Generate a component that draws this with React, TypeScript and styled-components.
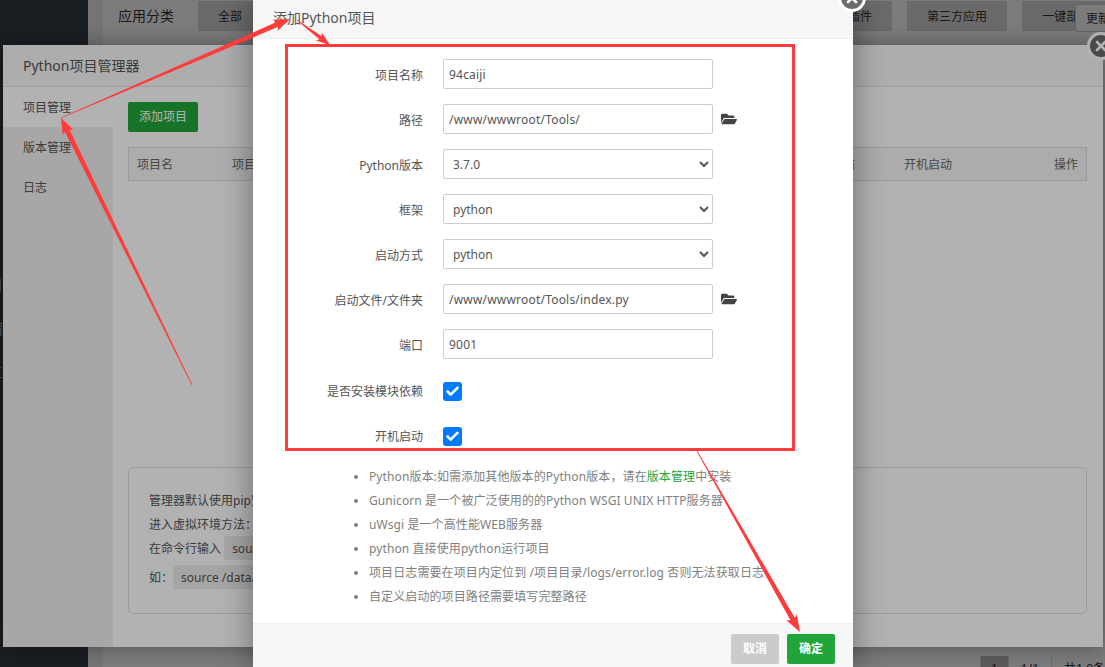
import React from 'react';
import styled, { createGlobalStyle } from 'styled-components';
import { FaFolderOpen } from 'react-icons/fa';
import { X, Check } from 'lucide-react';

const FONT = '"Noto Sans", "Noto Sans CJK SC", sans-serif';
const GREEN = '#20a53a';
const RED = '#ff3b3b';

const GlobalStyle = createGlobalStyle`
  html, body {
    margin: 0;
    padding: 0;
    overflow: hidden;
  }
  * {
    box-sizing: border-box;
  }
  body {
    font-family: ${FONT};
    font-size: 12px;
    color: #555;
  }
`;

const Stage = styled.div`
  position: relative;
  width: 1105px;
  height: 667px;
  overflow: hidden;
`;

/* page behind the dialogs */
const Page = styled.div`
  display: flex;
  height: 100%;
`;

const NavBar = styled.div`
  width: 88px;
  flex: none;
  padding-top: 263px;
  background: #353f49;
  overflow: hidden;
`;

const NavGlyph = styled.div`
  height: 43.5px;
  line-height: 43.5px;
  margin-left: -11px;
  font-size: 14px;
  color: #aab0b5;
`;

const Main = styled.div`
  flex: 1;
  min-width: 0;
  padding-left: 15px;
  background: #f0f0f0;
`;

const Panel = styled.div`
  display: flex;
  flex-direction: column;
  height: 100%;
  padding: 1px 0 0 15px;
  background: #fff;
  overflow: hidden;
`;

const CategoryRow = styled.div`
  display: flex;
  align-items: center;
  gap: 15px;
`;

const CategoryLabel = styled.div`
  flex: none;
  width: 65px;
  padding-bottom: 2px;
  font-size: 14px;
  color: #333;
  white-space: nowrap;
`;

const CategoryButton = styled.div`
  flex: none;
  height: 30px;
  line-height: 31px;
  padding: 0 20px;
  background: #dcdcdc;
  color: #333;
  white-space: nowrap;
`;

const Pager = styled.div`
  display: flex;
  justify-content: flex-end;
  height: 11px;
  margin: auto -12px 0 0;
`;

const PagerItem = styled.div<{ $active?: boolean }>`
  flex: none;
  height: 30px;
  line-height: 26px;
  padding: 0 ${(p) => (p.$active ? 10 : 12)}px;
  border-left: 1px solid #ddd;
  background: ${(p) => (p.$active ? '#bbb' : '#fff')};
  color: #333;
  white-space: nowrap;
`;

const UpdateButton = styled.div`
  position: absolute;
  top: 4px;
  left: 1075px;
  width: 60px;
  height: 28px;
  padding-left: 10px;
  line-height: 28px;
  border: 1px solid #ccc;
  border-radius: 3px;
  background: #fff;
  color: #333;
`;

const Mask = styled.div`
  position: absolute;
  inset: 0;
  background: rgba(0, 0, 0, 0.3);
`;

/* close button shared by both dialogs */
const CloseButton = styled.div<{ $top: number; $right: number }>`
  position: absolute;
  top: ${(p) => p.$top}px;
  right: ${(p) => p.$right}px;
  display: flex;
  align-items: center;
  justify-content: center;
  width: 28px;
  height: 28px;
  border: 3px solid #fff;
  border-radius: 50%;
  background: #6b6b6b;
  color: #fff;
`;

/* Python manager window */
const ManagerWindow = styled.div`
  position: absolute;
  left: 3px;
  top: 45px;
  display: flex;
  flex-direction: column;
  width: 1100px;
  height: 602px;
  background: #fff;
  box-shadow: 0 0 20px rgba(0, 0, 0, 0.35);
`;

const ManagerTitle = styled.div`
  flex: none;
  height: 42px;
  line-height: 41px;
  padding-left: 20px;
  border-bottom: 1px solid #e6e6e6;
  background: #f8f8f8;
  font-size: 14px;
`;

const ManagerBody = styled.div`
  flex: 1;
  display: flex;
  min-height: 0;
`;

const TabList = styled.div`
  flex: none;
  width: 110px;
  background: #f0f0f0;
`;

const TabItem = styled.div<{ $active?: boolean }>`
  height: 40px;
  line-height: 42px;
  padding-left: 20px;
  background: ${(p) => (p.$active ? '#fff' : 'transparent')};
`;

const ManagerContent = styled.div`
  flex: 1;
  display: flex;
  flex-direction: column;
  padding: 15px 16px 33px 15px;
`;

const AddButton = styled.div`
  width: 70px;
  height: 30px;
  line-height: 30px;
  text-align: center;
  border-radius: 2px;
  background: ${GREEN};
  color: #fff;
`;

const TableHead = styled.div`
  display: grid;
  grid-template-columns: 95px 575px 97px 1fr auto;
  align-items: center;
  height: 34px;
  margin-top: 15px;
  padding: 0 8px;
  border: 1px solid #ddd;
  background: #f6f6f6;
  color: #666;
`;

const InfoBox = styled.div`
  height: 147px;
  margin-top: auto;
  padding: 20px;
  border: 1px solid #ddd;
  border-radius: 5px;
  white-space: nowrap;
`;

const InfoLine = styled.div`
  height: 24px;
  line-height: 26px;
`;

const CodeLine = styled(InfoLine)`
  & + & {
    margin-top: 5px;
  }
`;

const Code = styled.span`
  display: inline-block;
  height: 24px;
  padding: 0 8px;
  background: #ececec;
`;

/* add project dialog */
const Modal = styled.div`
  position: absolute;
  left: 253px;
  top: 0;
  display: flex;
  flex-direction: column;
  width: 600px;
  height: 667px;
  background: #fff;
  box-shadow: 0 0 30px rgba(0, 0, 0, 0.4);
`;

const ModalTitle = styled.div`
  flex: none;
  height: 39px;
  line-height: 36px;
  padding-left: 20px;
  border-bottom: 1px solid #eee;
  background: #f6f6f6;
  font-size: 14px;
`;

const Form = styled.div`
  flex: 1;
  display: flex;
  flex-direction: column;
  gap: 15px;
  padding-top: 20px;
`;

const FormRow = styled.div`
  display: flex;
  align-items: center;
  height: 30px;
`;

const RowLabel = styled.div<{ $flush?: boolean }>`
  flex: none;
  width: 170px;
  margin-right: 20px;
  padding-top: ${(p) => (p.$flush ? 0 : 2)}px;
  text-align: right;
  white-space: nowrap;
`;

const TextInput = styled.input`
  width: 270px;
  height: 30px;
  padding: 0 5px;
  border: 1px solid #ccc;
  border-radius: 2px;
  outline: none;
  font-family: ${FONT};
  font-size: 12px;
  letter-spacing: 0.2px;
  color: #555;
`;

const SelectInput = styled.select`
  width: 270px;
  height: 30px;
  padding: 0 5px;
  border: 1px solid #ccc;
  border-radius: 2px;
  outline: none;
  background: #fff;
  font-family: ${FONT};
  font-size: 12px;
  color: #555;
`;

const FolderIcon = styled(FaFolderOpen)`
  margin-left: 8px;
  font-size: 16px;
  color: #444;
`;

const CheckGroup = styled.div`
  display: flex;
  flex-direction: column;
  gap: 15px;
  margin-top: 2px;
`;

const CheckBox = styled.div`
  display: flex;
  align-items: center;
  justify-content: center;
  width: 19px;
  height: 19px;
  border-radius: 3px;
  background: #007bff;
  color: #fff;
`;

const TipList = styled.ul`
  margin: -1px 0 0;
  padding: 0 0 0 116px;
  color: #808080;
  letter-spacing: 0.1px;
  list-style: disc;
`;

const Tip = styled.li`
  height: 24px;
  line-height: 24px;
  white-space: nowrap;
`;

const TipLink = styled.span`
  color: ${GREEN};
`;

const ModalFooter = styled.div`
  flex: none;
  display: flex;
  justify-content: flex-end;
  gap: 8px;
  height: 44px;
  padding: 10px 18px 0 0;
  border-top: 1px solid #eee;
  background: #f6f8f8;
`;

const FooterButton = styled.div<{ $primary?: boolean }>`
  width: 48px;
  height: 30px;
  line-height: 30px;
  text-align: center;
  border-radius: 2px;
  background: ${(p) => (p.$primary ? GREEN : '#cbcbcb')};
  color: #fff;
  font-weight: 700;
`;

/* red annotations drawn on top of the screenshot */
const Annotations = styled.svg`
  position: absolute;
  inset: 0;
  pointer-events: none;
`;

type Point = [number, number];

// tapered arrow: hair thin at the tail, thick where it meets the head
const arrowPoints = (from: Point, to: Point, head: number, wing: number, neck: number) => {
  const dx = to[0] - from[0];
  const dy = to[1] - from[1];
  const len = Math.hypot(dx, dy);
  const ux = dx / len;
  const uy = dy / len;
  const nx = -uy;
  const ny = ux;
  const bx = to[0] - ux * head;
  const by = to[1] - uy * head;
  const pts: Point[] = [
    [from[0] + nx * 0.4, from[1] + ny * 0.4],
    [bx + nx * neck, by + ny * neck],
    [bx - ux * 2 + nx * wing, by - uy * 2 + ny * wing],
    to,
    [bx - ux * 2 - nx * wing, by - uy * 2 - ny * wing],
    [bx - nx * neck, by - ny * neck],
    [from[0] - nx * 0.4, from[1] - ny * 0.4],
  ];
  return pts.map((p) => p.join(',')).join(' ');
};

const ARROWS: { from: Point; to: Point; head: number; wing: number; neck: number }[] = [
  { from: [61, 118], to: [290, 19], head: 14, wing: 6, neck: 2.5 },
  { from: [297, 20], to: [330, 45], head: 12, wing: 5, neck: 1.8 },
  { from: [192, 385], to: [61, 118], head: 14, wing: 6, neck: 2.5 },
  { from: [697, 451], to: [800, 632], head: 15, wing: 6, neck: 2.5 },
];

const CATEGORIES = [
  '全部',
  '已安装',
  '运行环境',
  '系统工具',
  '宝塔插件',
  '专业版插件',
  '企业版插件',
  '第三方应用',
  '一键部署',
];

type Field = {
  label: string;
  value: string;
  kind: 'text' | 'path' | 'select';
};

const FIELDS: Field[] = [
  { label: '项目名称', value: '94caiji', kind: 'text' },
  { label: '路径', value: '/www/wwwroot/Tools/', kind: 'path' },
  { label: 'Python版本', value: '3.7.0', kind: 'select' },
  { label: '框架', value: 'python', kind: 'select' },
  { label: '启动方式', value: 'python', kind: 'select' },
  { label: '启动文件/文件夹', value: '/www/wwwroot/Tools/index.py', kind: 'path' },
  { label: '端口', value: '9001', kind: 'text' },
];

const App: React.FC = () => (
  <Stage>
    <GlobalStyle />
    <Page>
      <NavBar>
        <NavGlyph>日</NavGlyph>
        <NavGlyph>宿</NavGlyph>
        <NavGlyph>三</NavGlyph>
      </NavBar>
      <Main>
        <Panel>
          <CategoryRow>
            <CategoryLabel>应用分类</CategoryLabel>
            {CATEGORIES.map((name) => (
              <CategoryButton key={name}>{name}</CategoryButton>
            ))}
          </CategoryRow>
          <Pager>
            <PagerItem $active>1</PagerItem>
            <PagerItem>1/1</PagerItem>
            <PagerItem>共1.0条</PagerItem>
          </Pager>
        </Panel>
      </Main>
    </Page>
    <UpdateButton>更新</UpdateButton>
    <Mask />

    <ManagerWindow>
      <ManagerTitle>Python项目管理器</ManagerTitle>
      <ManagerBody>
        <TabList>
          <TabItem $active>项目管理</TabItem>
          <TabItem>版本管理</TabItem>
          <TabItem>日志</TabItem>
        </TabList>
        <ManagerContent>
          <AddButton>添加项目</AddButton>
          <TableHead>
            <span>项目名</span>
            <span>项目路径</span>
            <span>服务状态</span>
            <span>开机启动</span>
            <span>操作</span>
          </TableHead>
          <InfoBox>
            <InfoLine>管理器默认使用pip安装模块并创建虚拟环境</InfoLine>
            <InfoLine>进入虚拟环境方法：</InfoLine>
            <CodeLine>
              在命令行输入 <Code>source 项目路径/bin/activate</Code>
            </CodeLine>
            <CodeLine>
              如：<Code>source /data/project/bin/activate</Code>
            </CodeLine>
          </InfoBox>
        </ManagerContent>
      </ManagerBody>
      <CloseButton $top={-13} $right={-12}>
        <X size={16} strokeWidth={4} />
      </CloseButton>
    </ManagerWindow>
    <Mask />

    <Modal>
      <ModalTitle>添加Python项目</ModalTitle>
      <Form>
        {FIELDS.map((field) => (
          <FormRow key={field.label}>
            <RowLabel>{field.label}</RowLabel>
            {field.kind === 'select' ? (
              <SelectInput defaultValue={field.value}>
                <option>{field.value}</option>
              </SelectInput>
            ) : (
              <TextInput readOnly defaultValue={field.value} />
            )}
            {field.kind === 'path' && <FolderIcon />}
          </FormRow>
        ))}
        <CheckGroup>
          <FormRow>
            <RowLabel $flush>是否安装模块依赖</RowLabel>
            <CheckBox>
              <Check size={15} strokeWidth={4} />
            </CheckBox>
          </FormRow>
          <FormRow>
            <RowLabel $flush>开机启动</RowLabel>
            <CheckBox>
              <Check size={15} strokeWidth={4} />
            </CheckBox>
          </FormRow>
        </CheckGroup>
        <TipList>
          <Tip>
            Python版本:如需添加其他版本的Python版本，请在<TipLink>版本管理</TipLink>中安装
          </Tip>
          <Tip>Gunicorn 是一个被广泛使用的的Python WSGI UNIX HTTP服务器</Tip>
          <Tip>uWsgi 是一个高性能WEB服务器</Tip>
          <Tip>python 直接使用python运行项目</Tip>
          <Tip>项目日志需要在项目内定位到 /项目目录/logs/error.log 否则无法获取日志</Tip>
          <Tip>自定义启动的项目路径需要填写完整路径</Tip>
        </TipList>
      </Form>
      <ModalFooter>
        <FooterButton>取消</FooterButton>
        <FooterButton $primary>确定</FooterButton>
      </ModalFooter>
      <CloseButton $top={-16} $right={-13}>
        <X size={16} strokeWidth={4} />
      </CloseButton>
    </Modal>

    <Annotations width={1105} height={667}>
      <rect x={286.5} y={45.5} width={507} height={404} fill="none" stroke={RED} strokeWidth={3} />
      {ARROWS.map((a) => (
        <polygon
          key={a.to.join()}
          fill={RED}
          points={arrowPoints(a.from, a.to, a.head, a.wing, a.neck)}
        />
      ))}
    </Annotations>
  </Stage>
);

export default App;
